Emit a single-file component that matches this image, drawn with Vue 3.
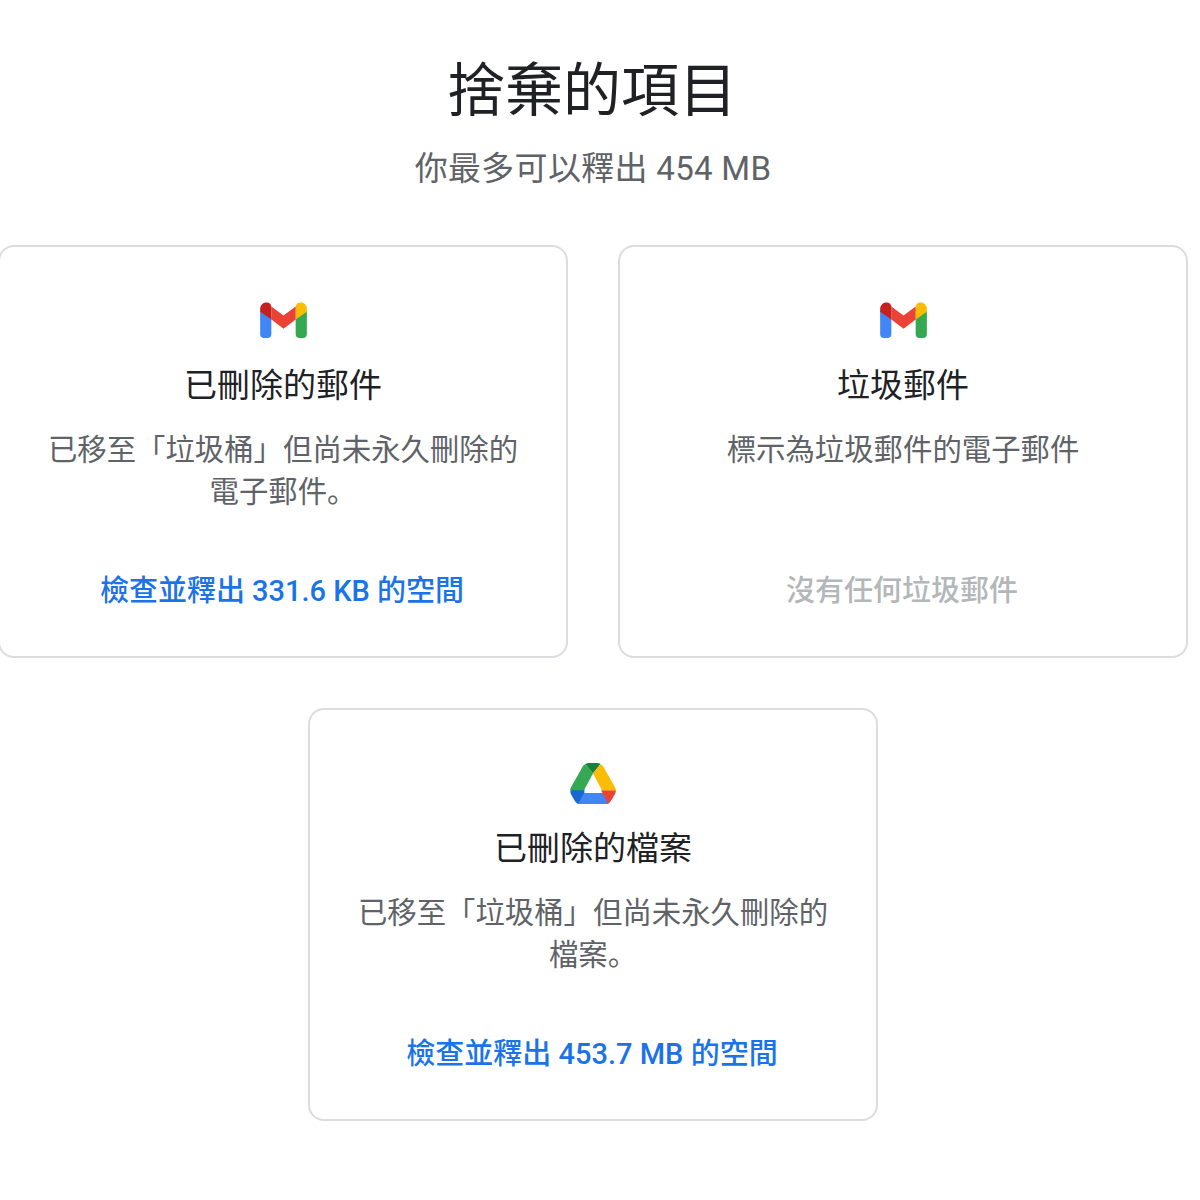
<script setup>
const cards = [
  { icon: 'gmail', title: '已刪除的郵件', lines: ['已移至「垃圾桶」但尚未永久刪除的', '電子郵件'], end: '。', action: '檢查並釋出 331.6 KB 的空間', on: true },
  { icon: 'gmail', title: '垃圾郵件', lines: ['標示為垃圾郵件的電子郵件'], end: '', action: '沒有任何垃圾郵件', on: false },
  { icon: 'drive', title: '已刪除的檔案', lines: ['已移至「垃圾桶」但尚未永久刪除的', '檔案'], end: '。', action: '檢查並釋出 453.7 MB 的空間', on: true },
]
</script>

<template>
  <main class="page">
    <h1 class="title">捨棄的項目</h1>
    <p class="sub">你最多可以釋出 454 MB</p>
    <section class="cards">
      <article v-for="c in cards" :key="c.title" class="card">
        <svg v-if="c.icon === 'gmail'" class="icon gmail" viewBox="0 0 48 37">
          <path d="M0 9v24a4 4 0 0 0 4 4h3.500a4 4 0 0 0 4-4V17z" fill="#4285f4"/>
          <path d="M48 9v24a4 4 0 0 1-4 4h-3.500a4 4 0 0 1-4-4V17z" fill="#34a853"/>
          <path d="M36.500 4.500V18L48 10V7C48 1.500 42 -1.500 37.500 2z" fill="#fbbc04"/>
          <path d="M11.500 4.500L24 14 36.500 4.500V18L24 27.500 11.500 18z" fill="#ea4335"/>
          <path d="M0 7v3l11.500 8V4.500L10.500 2C6 -1.500 0 1.500 0 7z" fill="#c5221f"/>
        </svg>
        <svg v-else class="icon drive" viewBox="0 0 48 43">
          <path d="M0.800 31.500 3.600 36.800 8 43h32l4.500-6.200 2.700-5.300z" fill="#4285f4"/>
          <path d="M15 27.500 1 27.500C.2 29 0 31 .8 32.500L4.500 39c1 1.800 2.600 3 4 3.500L15 31z" fill="#1967d2"/>
          <path d="M24 11 16 1C14.800 1.700 14 2.500 13.400 3.500L.9 25.500C.3 26.600 0 27.500 0 28.500h14.500z" fill="#34a853"/>
          <path d="M39.500 42.500c1.300-.6 2.500-1.600 3.300-3l4.300-7.300c.7-1.300.9-2.500.9-3.700H32.500z" fill="#ea4335"/>
          <path d="M24 11 31.800 1C30.600.4 29.500 0 28.200 0h-8.400C18.500 0 17.200.4 16 1z" fill="#188038"/>
          <path d="M31.800 1 24 11l9.500 17.500H48c0-1-.3-1.900-.9-3L34.700 3.800C33.900 2.600 33 1.700 31.800 1z" fill="#fbbc04"/>
        </svg>
        <h2 class="card-title">{{ c.title }}</h2>
        <div class="desc">
          <p v-for="(line, i) in c.lines" :key="i" class="line">
            <span>{{ line }}</span><span v-if="i === c.lines.length - 1 && c.end" class="end">{{ c.end }}</span>
          </p>
        </div>
        <a class="action" :class="{ off: !c.on }">{{ c.action }}</a>
      </article>
    </section>
  </main>
</template>

<style scoped>
.page {
  width: 1200px;
  height: 1200px;
  box-sizing: border-box;
  padding-top: 53px;
  background: #fff;
  font-family: Roboto, "Noto Sans CJK TC", sans-serif;
  overflow: hidden;
}
.title {
  margin: 0 0 0 -16px;
  text-align: center;
  font-size: 58px;
  line-height: 76px;
  font-weight: 400;
  color: #202124;
}
.sub {
  margin: 17px 0 0 -14px;
  text-align: center;
  font-size: 33px;
  line-height: 46px;
  letter-spacing: 0.3px;
  color: #5f6368;
}
.cards {
  margin: 52.5px 0 0 -2px;
  width: 1190px;
  display: flex;
  flex-wrap: wrap;
  justify-content: center;
  gap: 50px;
}
.card {
  width: 570px;
  height: 413px;
  box-sizing: border-box;
  border: 2px solid #dadce0;
  border-radius: 16px;
  padding: 55px 30px 0;
  display: flex;
  flex-direction: column;
  align-items: center;
  text-align: center;
}
.icon {
  display: block;
  flex: none;
  filter: blur(0.5px);
}
.gmail {
  width: 47px;
  height: 36px;
}
.drive {
  width: 46px;
  height: 41px;
  margin-top: -2px;
  margin-bottom: -3px;
}
.card-title {
  margin: 25px 0 0;
  font-size: 33px;
  line-height: 46px;
  font-weight: 400;
  color: #202124;
}
.desc {
  margin: 20px 0 0;
  width: 480px;
  height: 141px;
  font-size: 29.4px;
  line-height: 42px;
  color: #5f6368;
}
.line {
  margin: 0;
}
.end {
  font-family: "Noto Sans CJK SC", sans-serif;
  line-height: 0;
}
.action {
  margin-left: -2px;
  font-size: 29px;
  line-height: 42px;
  font-weight: 500;
  color: #1a73e8;
}
.action.off {
  color: #b4b7b9;
}
</style>
